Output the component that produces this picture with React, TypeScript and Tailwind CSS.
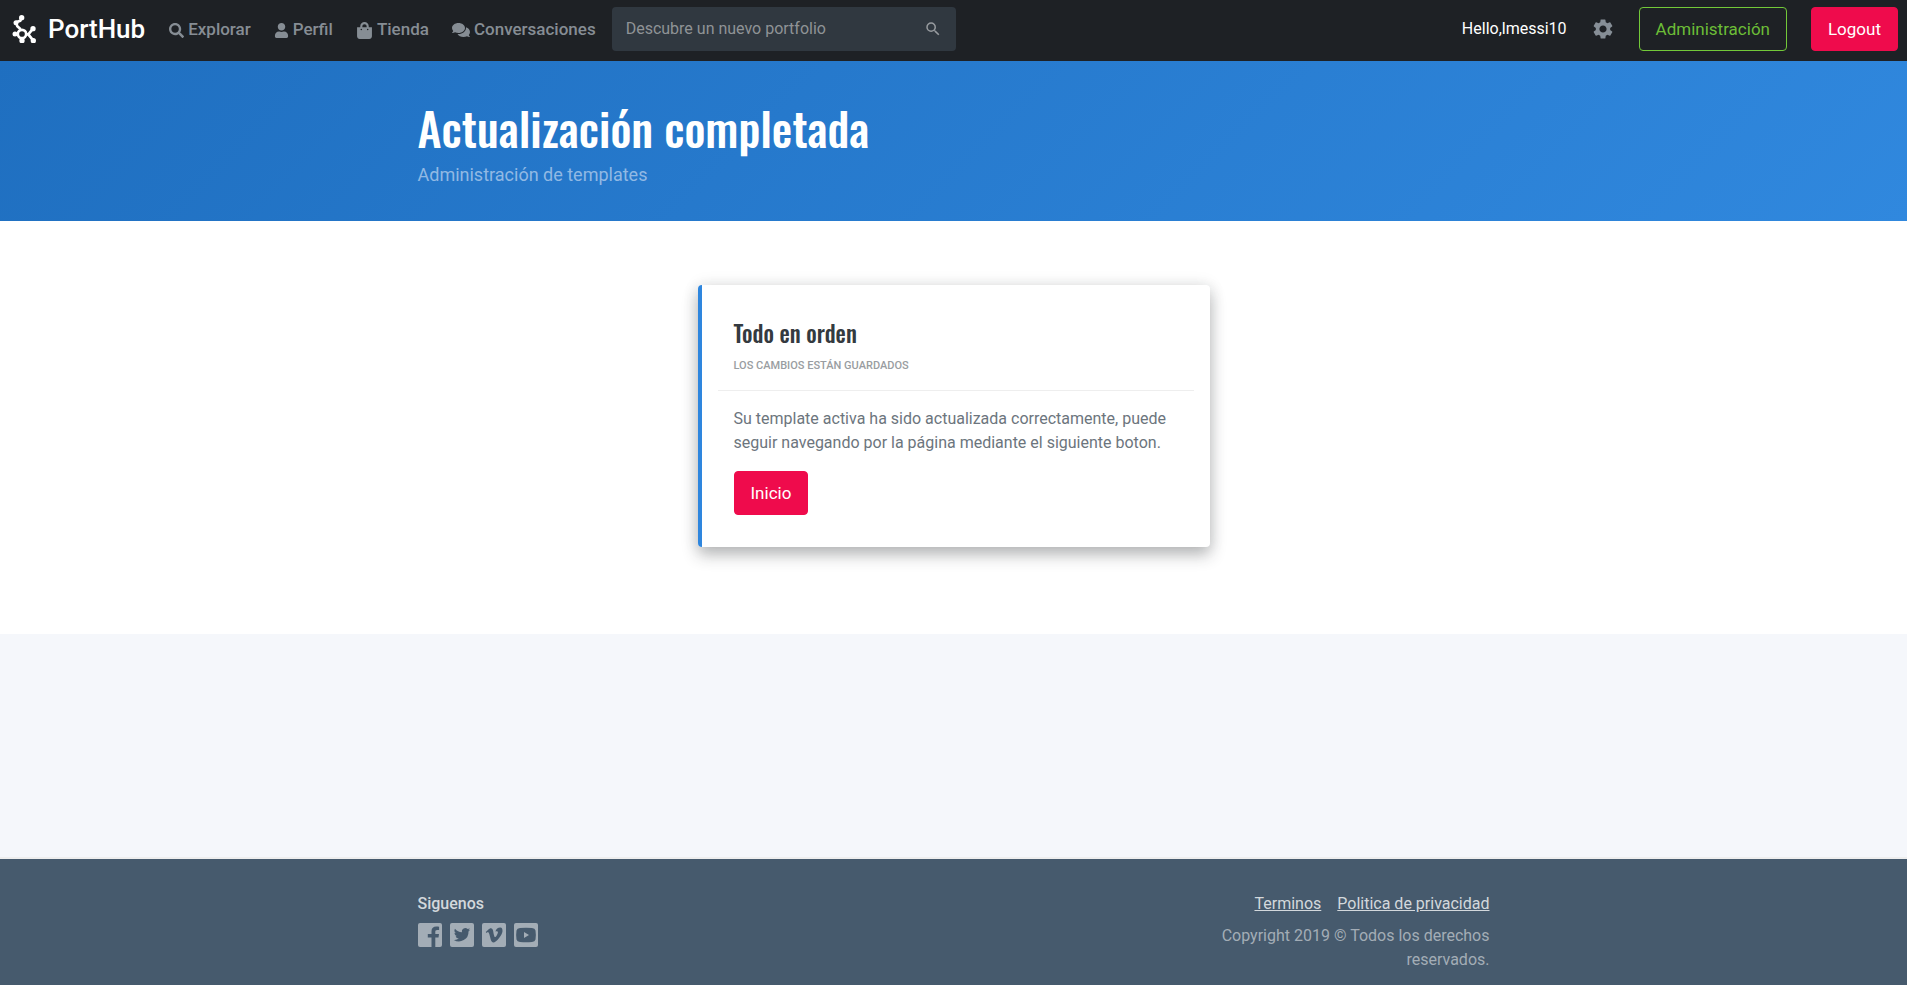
import { FaSearch, FaUser, FaShoppingBag, FaComments } from "react-icons/fa";
import { MdSearch, MdSettings } from "react-icons/md";

const navLinks = [
  { label: "Explorar", Icon: FaSearch, size: "h-[15px] w-auto" },
  { label: "Perfil", Icon: FaUser, size: "h-[15px] w-auto" },
  { label: "Tienda", Icon: FaShoppingBag, size: "h-[17px] w-auto" },
  { label: "Conversaciones", Icon: FaComments, size: "h-[18px] w-auto" },
];

const socials = [
  {
    label: "Facebook",
    glyph: "M13.500 24v-9.500H9.800v-3.600h3.700V8.200c0-3.200 1.900-4.700 4.800-4.700 1.300 0 2.500.1 2.800.2v3.200h-1.900c-1.500 0-1.900.8-1.900 1.800v2.200h3.700l-.5 3.600h-3.200V24z",
  },
  {
    label: "Twitter",
    glyph: "M20.200 6.600c-.6.3-1.200.5-1.900.6.7-.4 1.200-1.100 1.500-1.900-.7.4-1.400.7-2.100.8A3.400 3.400 0 0 0 11.900 9.200 9.600 9.600 0 0 1 5 5.700a3.400 3.400 0 0 0 1 4.500c-.5 0-1.100-.2-1.500-.4 0 1.600 1.100 3 2.700 3.300-.5.1-1 .2-1.500.1.400 1.300 1.700 2.300 3.100 2.300A6.800 6.800 0 0 1 3.800 16.900 9.600 9.600 0 0 0 18.500 8.400c.7-.5 1.200-1.100 1.700-1.800z",
  },
  {
    label: "Vimeo",
    glyph: "M20.500 8.300c-.1 1.700-1.200 3.900-3.400 6.700-2.300 3-4.200 4.400-5.800 4.400-1 0-1.800-.9-2.500-2.700L7.500 11.800c-.5-1.800-1-2.700-1.600-2.700-.1 0-.6.300-1.300.8L3.800 8.900 6.200 6.700c1.100-1 1.900-1.500 2.500-1.500 1.300-.1 2.100.8 2.400 2.600.3 2 .6 3.200.7 3.700.4 1.700.8 2.600 1.300 2.600.4 0 .9-.6 1.600-1.700s1.100-2 1.200-2.600c.1-1-.3-1.500-1.200-1.500-.4 0-.9.1-1.300.3.9-2.800 2.500-4.200 5-4.100 1.500.1 2.200 1.300 2.100 3.800z",
  },
  {
    label: "YouTube",
    glyph: "M6 5Q12 4.400 18 5Q21 5.200 21.500 7.500Q22.200 12 21.500 16.500Q21 18.800 18 19Q12 19.600 6 19Q3 18.800 2.500 16.500Q1.800 12 2.500 7.500Q3 5.200 6 5zM10 9v6l5-3z",
  },
];

function Logo() {
  return (
    <svg viewBox="6 9 72 84" className="h-7 w-6" aria-hidden="true">
      <path
        d="M35 17 31 26 18 31 22 43 32 52M16 66h12M36 76v10M45 67h12M69 50 55 67 70 86"
        fill="none"
        stroke="#fff"
        strokeWidth="8"
        strokeLinejoin="round"
      />
      <g fill="#fff">
        <circle cx="35" cy="17" r="8" />
        <circle cx="18" cy="32" r="7.500" />
        <circle cx="15" cy="66" r="7.500" />
        <circle cx="36" cy="86" r="8" />
        <circle cx="69" cy="50" r="8" />
        <circle cx="70" cy="86" r="8" />
      </g>
      <circle cx="36" cy="66" r="12.500" fill="#1e2125" stroke="#fff" strokeWidth="8" />
    </svg>
  );
}

export default function App() {
  return (
    <div className="flex min-h-screen flex-col bg-[#f5f7fb] font-['Roboto',sans-serif] text-base text-[#6c757d]">
      <header className="flex items-center justify-between bg-[#1e2125] pt-[7px] pr-[9px] pb-2.5 pl-3">
        <nav className="flex items-center">
          <a href="#" className="mr-6 flex items-center gap-3 text-[26px] leading-11 font-medium text-white">
            <Logo />
            PortHub
          </a>
          <ul className="mt-0.5 mr-4 flex items-center gap-[23px]">
            {navLinks.map(({ label, Icon, size }) => (
              <li key={label}>
                <a href="#" className="flex items-center gap-1 text-[17px] font-medium text-[#868d94]">
                  <Icon aria-hidden="true" className={size} />
                  {label}
                </a>
              </li>
            ))}
          </ul>
          <form className="flex h-11 w-[344px] items-center rounded-sm bg-[#303840] px-3.5">
            <input
              type="text"
              aria-label="Descubre un nuevo portfolio"
              placeholder="Descubre un nuevo portfolio"
              className="min-w-0 flex-1 bg-transparent text-base outline-none placeholder:text-[#8f9396]"
            />
            <button type="button" aria-label="Buscar" className="text-[#979b9f]">
              <MdSearch className="size-[18px]" />
            </button>
          </form>
        </nav>
        <div className="flex items-center gap-6">
          <span className="text-white">Hello,lmessi10</span>
          <button type="button" aria-label="Ajustes" className="text-[#868e96]">
            <MdSettings className="size-6" />
          </button>
          <button type="button" className="h-11 rounded-sm border border-[#73c939] px-4 pt-0.5 text-[17px] text-[#6cbd37]">
            Administración
          </button>
          <button type="button" className="h-11 rounded-sm border border-[#ef0b4c] bg-[#ef0b4c] px-4 pt-0.5 text-[17px] text-white">
            Logout
          </button>
        </div>
      </header>

      <section className="bg-linear-135 from-[#1f6fc0] to-[#3088de] px-4 pt-9 pb-8">
        <div className="mx-auto max-w-[1072px]">
          <h1 className="mb-1 font-['Oswald','Roboto_Condensed','Liberation_Sans_Narrow','Roboto',sans-serif] text-[46px] leading-15 font-medium text-white">
            Actualización completada
          </h1>
          <p className="text-lg leading-7 text-[#91b9e4]">Administración de templates</p>
        </div>
      </section>

      <main className="bg-white px-4 pt-16 pb-[87px]">
        <article className="mx-auto max-w-[512px] rounded border-l-4 border-[#2e86de] px-4 pt-8 pb-8 shadow-[0_8px_16px_rgba(33,37,41,0.3),0_0_16px_rgba(33,37,41,0.1)]">
          <header className="border-b border-[#eeeeee] px-4 pb-4">
            <h2 className="font-['Oswald','Roboto_Condensed','Liberation_Sans_Narrow','Roboto',sans-serif] text-[23px] leading-8 font-medium text-[#343a40]">
              Todo en orden
            </h2>
            <p className="mt-[9px] text-[11px] leading-4 font-medium text-[#999da1] uppercase">
              Los cambios están guardados
            </p>
          </header>
          <div className="px-4 pt-4">
            <p className="mb-4 leading-6">
              Su template activa ha sido actualizada correctamente, puede seguir navegando por la página mediante el
              siguiente boton.
            </p>
            <button type="button" className="h-11 rounded-sm border border-[#ef0b4c] bg-[#ef0b4c] px-4 pt-0.5 text-[17px] text-white">
              Inicio
            </button>
          </div>
        </article>
      </main>

      <div className="flex-1" />

      <footer className="border-t-2 border-[#eeeeee] bg-[#465a6d] px-4 pt-[33px] pb-[13px]">
        <div className="mx-auto flex max-w-[1072px] justify-between">
          <div>
            <h3 className="leading-6 font-medium text-[#d3d8dc]">Siguenos</h3>
            <ul className="mt-[7px] flex gap-2">
              {socials.map(({ label, glyph }) => (
                <li key={label}>
                  <a href="#" aria-label={label} className="block">
                    <svg viewBox="0 0 24 24" className="size-6" aria-hidden="true">
                      <rect width="24" height="24" rx="2" fill="#a3adb6" />
                      <path d={glyph} fill="#465a6d" fillRule="evenodd" />
                    </svg>
                  </a>
                </li>
              ))}
            </ul>
          </div>
          <div className="max-w-[284px] text-right leading-6">
            <ul className="flex justify-end gap-4 text-[#d3d8dc]">
              <li><a href="#" className="underline">Terminos</a></li>
              <li><a href="#" className="underline">Politica de privacidad</a></li>
            </ul>
            <p className="mt-2 text-[#a3adb6]">Copyright 2019 © Todos los derechos reservados.</p>
          </div>
        </div>
      </footer>
    </div>
  );
}
